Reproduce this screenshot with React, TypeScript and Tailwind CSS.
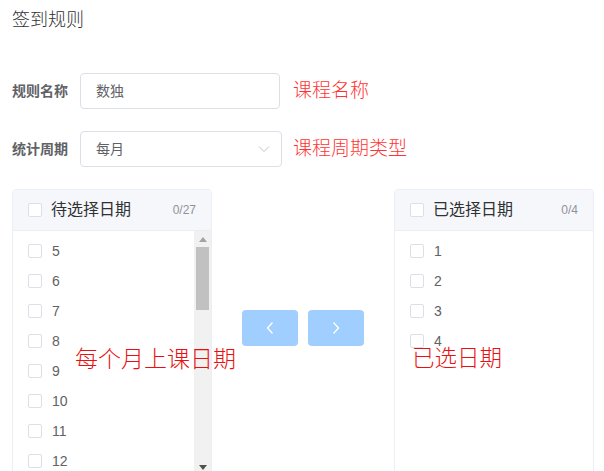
import React from "react";

const font = { fontFamily: '"Liberation Sans", "Noto Sans CJK SC", sans-serif' };

function Box() {
  return <span className="inline-block w-[14px] h-[14px] rounded-[2px] border border-[#dcdfe6] bg-white shrink-0" />;
}

function Panel({ title, count, items, scroll }: { title: string; count: string; items: number[]; scroll?: boolean }) {
  return (
    <div className="w-[200px] h-[288px] shrink-0 border border-[#ebeef5] rounded-[4px] overflow-hidden flex flex-col bg-white">
      <div className="h-[41px] shrink-0 bg-[#f5f7fa] border-b border-[#ebeef5] flex items-center pl-[15px] pr-[15px]">
        <Box />
        <span className="ml-[9px] text-[16px] text-[#303133]">{title}</span>
        <span className="ml-auto text-[12px] text-[#909399]">{count}</span>
      </div>
      <div className="flex flex-1 min-h-0">
        <div className="flex-1 pt-[5px]">
          {items.map((n) => (
            <div key={n} className="h-[30px] flex items-center pl-[15px]">
              <Box />
              <span className="ml-[10px] text-[14px] text-[#606266]">{n}</span>
            </div>
          ))}
        </div>
        {scroll && (
          <div className="w-[17px] bg-[#f1f1f1] flex flex-col items-center">
            <div className="h-[16px] w-full flex items-center justify-center">
              <svg width="8" height="5" viewBox="0 0 8 5"><path d="M4 0L8 5H0Z" fill="#a3a3a3" /></svg>
            </div>
            <div className="w-[13px] h-[63px] bg-[#c1c1c1]" />
            <div className="flex-1" />
            <div className="h-[17px] w-full flex items-center justify-center">
              <svg width="8" height="5" viewBox="0 0 8 5"><path d="M0 0H8L4 5Z" fill="#505050" /></svg>
            </div>
          </div>
        )}
      </div>
    </div>
  );
}

export default function App() {
  const left = [5, 6, 7, 8, 9, 10, 11, 12];
  return (
    <div className="w-[604px] h-[471px] overflow-hidden bg-white pl-[12px] pt-[8px]" style={font}>
      <div className="text-[18px] leading-[24px] text-[#303133] font-light">签到规则</div>
      <div className="mt-[41px] flex items-center h-[36px]">
        <div className="w-[68px] text-[14px] font-bold text-[#606266]">规则名称</div>
        <div className="w-[200px] h-[36px] border border-[#dcdfe6] rounded-[4px] flex items-center pl-[15px] text-[14px] text-[#606266]">数独</div>
        <div className="ml-[13px] text-[19px] text-[#ff3333] font-light">课程名称</div>
      </div>
      <div className="mt-[22px] flex items-center h-[36px]">
        <div className="w-[68px] text-[14px] font-bold text-[#606266]">统计周期</div>
        <div className="w-[202px] h-[36px] border border-[#dcdfe6] rounded-[4px] flex items-center pl-[15px] pr-[11px] text-[14px] text-[#606266]">
          <span>每月</span>
          <svg className="ml-auto" width="12" height="8" viewBox="0 0 12 8">
            <path d="M1 1.5L6 6.5L11 1.5" fill="none" stroke="#c0c4cc" strokeWidth="1" />
          </svg>
        </div>
        <div className="ml-[11px] text-[19px] text-[#ff3333] font-light">课程周期类型</div>
      </div>
      <div className="mt-[22px] flex items-start">
        <div className="relative">
          <Panel title="待选择日期" count="0/27" items={left} scroll />
          <div className="absolute left-[63px] top-[155px] text-[23px] leading-[30px] text-[#e81010] whitespace-nowrap font-light">每个月上课日期</div>
        </div>
        <div className="w-[182px] px-[30px] pt-[121px] flex gap-[10px]">
          <div className="w-[56px] h-[36px] rounded-[4px] bg-[#a0cfff] flex items-center justify-center">
            <svg width="8" height="12" viewBox="0 0 8 12"><path d="M6.5 0.5L1.5 6L6.5 11.5" fill="none" stroke="#fff" strokeWidth="1.3" /></svg>
          </div>
          <div className="w-[56px] h-[36px] rounded-[4px] bg-[#a0cfff] flex items-center justify-center">
            <svg width="8" height="12" viewBox="0 0 8 12"><path d="M1.5 0.5L6.5 6L1.5 11.5" fill="none" stroke="#fff" strokeWidth="1.3" /></svg>
          </div>
        </div>
        <div className="relative">
          <Panel title="已选择日期" count="0/4" items={[1, 2, 3, 4]} />
          <div className="absolute left-[18px] top-[155px] text-[22.5px] leading-[30px] text-[#e81010] whitespace-nowrap font-light">已选日期</div>
        </div>
      </div>
    </div>
  );
}
